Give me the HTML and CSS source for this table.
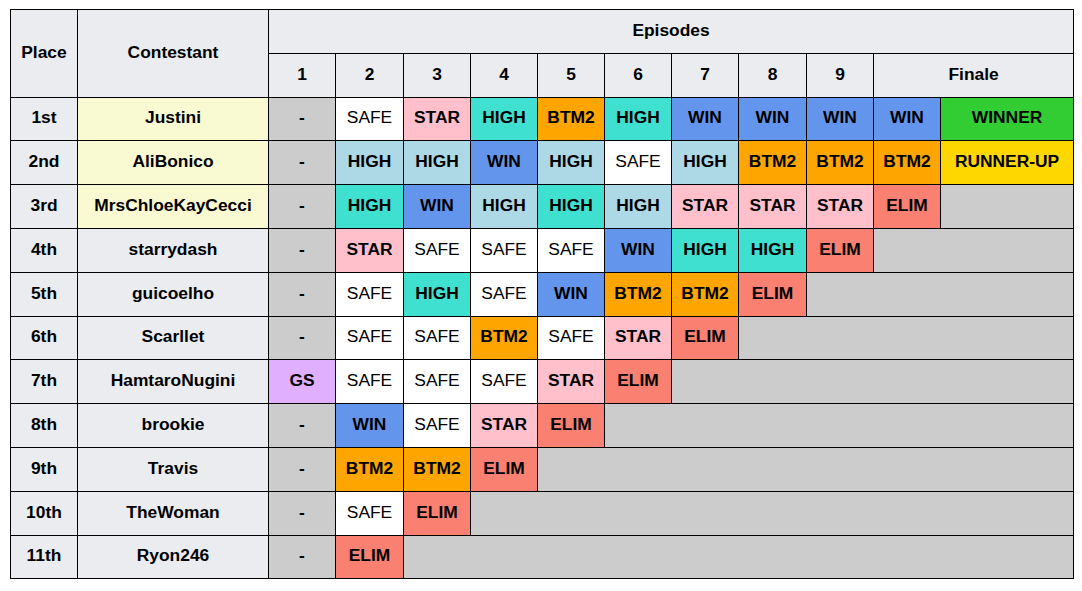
FILE: index.html
```html
<!DOCTYPE html>
<html>
<head>
<meta charset="utf-8">
<link rel="stylesheet" href="styles.css">
</head>
<body>
<table class="results">
  <colgroup>
    <col class="c-place"><col class="c-name">
    <col class="c-ep"><col class="c-ep2"><col class="c-ep"><col class="c-ep"><col class="c-ep"><col class="c-ep"><col class="c-ep"><col class="c-ep2"><col class="c-ep">
    <col class="c-ep"><col class="c-final">
  </colgroup>
  <thead>
    <tr>
      <th rowspan="2">Place</th>
      <th rowspan="2">Contestant</th>
      <th colspan="11">Episodes</th>
    </tr>
    <tr>
      <th>1</th><th>2</th><th>3</th><th>4</th><th>5</th><th>6</th><th>7</th><th>8</th><th>9</th>
      <th colspan="2">Finale</th>
    </tr>
  </thead>
  <tbody>
    <tr>
      <th>1st</th><td class="name top">Justini</td>
      <td class="na">-</td><td class="safe">SAFE</td><td class="star">STAR</td><td class="high">HIGH</td><td class="btm">BTM2</td><td class="high">HIGH</td><td class="win">WIN</td><td class="win">WIN</td><td class="win">WIN</td><td class="win">WIN</td><td class="winner">WINNER</td>
    </tr>
    <tr>
      <th>2nd</th><td class="name top">AliBonico</td>
      <td class="na">-</td><td class="low">HIGH</td><td class="low">HIGH</td><td class="win">WIN</td><td class="low">HIGH</td><td class="safe">SAFE</td><td class="low">HIGH</td><td class="btm">BTM2</td><td class="btm">BTM2</td><td class="btm">BTM2</td><td class="runner">RUNNER-UP</td>
    </tr>
    <tr>
      <th>3rd</th><td class="name top">MrsChloeKayCecci</td>
      <td class="na">-</td><td class="high">HIGH</td><td class="win">WIN</td><td class="low">HIGH</td><td class="high">HIGH</td><td class="low">HIGH</td><td class="star">STAR</td><td class="star">STAR</td><td class="star">STAR</td><td class="elim">ELIM</td><td class="out"></td>
    </tr>
    <tr>
      <th>4th</th><td class="name">starrydash</td>
      <td class="na">-</td><td class="star">STAR</td><td class="safe">SAFE</td><td class="safe">SAFE</td><td class="safe">SAFE</td><td class="win">WIN</td><td class="high">HIGH</td><td class="high">HIGH</td><td class="elim">ELIM</td><td class="out" colspan="2"></td>
    </tr>
    <tr>
      <th>5th</th><td class="name">guicoelho</td>
      <td class="na">-</td><td class="safe">SAFE</td><td class="high">HIGH</td><td class="safe">SAFE</td><td class="win">WIN</td><td class="btm">BTM2</td><td class="btm">BTM2</td><td class="elim">ELIM</td><td class="out" colspan="3"></td>
    </tr>
    <tr>
      <th>6th</th><td class="name">Scarllet</td>
      <td class="na">-</td><td class="safe">SAFE</td><td class="safe">SAFE</td><td class="btm">BTM2</td><td class="safe">SAFE</td><td class="star">STAR</td><td class="elim">ELIM</td><td class="out" colspan="4"></td>
    </tr>
    <tr>
      <th>7th</th><td class="name">HamtaroNugini</td>
      <td class="gs">GS</td><td class="safe">SAFE</td><td class="safe">SAFE</td><td class="safe">SAFE</td><td class="star">STAR</td><td class="elim">ELIM</td><td class="out" colspan="5"></td>
    </tr>
    <tr>
      <th>8th</th><td class="name">brookie</td>
      <td class="na">-</td><td class="win">WIN</td><td class="safe">SAFE</td><td class="star">STAR</td><td class="elim">ELIM</td><td class="out" colspan="6"></td>
    </tr>
    <tr>
      <th>9th</th><td class="name">Travis</td>
      <td class="na">-</td><td class="btm">BTM2</td><td class="btm">BTM2</td><td class="elim">ELIM</td><td class="out" colspan="7"></td>
    </tr>
    <tr>
      <th>10th</th><td class="name">TheWoman</td>
      <td class="na">-</td><td class="safe">SAFE</td><td class="elim">ELIM</td><td class="out" colspan="8"></td>
    </tr>
    <tr>
      <th>11th</th><td class="name">Ryon246</td>
      <td class="na">-</td><td class="elim">ELIM</td><td class="out" colspan="9"></td>
    </tr>
  </tbody>
</table>
</body>
</html>
```
FILE: styles.css
```css
html, body {
  margin: 0;
  padding: 0;
  background: #ffffff;
}

body {
  font-family: "Liberation Sans", Arial, sans-serif;
  font-size: 17.4px;
  color: #000000;
}

.results {
  margin: 9px 0 0 10px;
  border-collapse: collapse;
  table-layout: fixed;
  width: 1064px;
}

.c-place { width: 67px; }
.c-name { width: 191px; }
.c-ep { width: 67px; }
.c-ep2 { width: 68px; }
.c-final { width: 133px; }

.results tr {
  height: 43.8px;
}

.results th,
.results td {
  border: 1px solid #000000;
  text-align: center;
  vertical-align: middle;
  padding: 0 0 2px 0;
  font-weight: bold;
  white-space: nowrap;
}

.results th {
  background: #eaecf0;
}

.results td.name { background: #eaecf0; }
.results td.name.top { background: #fafad2; }
.results td.na { background: #cccccc; }
.results td.out { background: #cccccc; }
.results td.safe { background: #ffffff; font-weight: normal; }
.results td.star { background: #ffc0cb; }
.results td.high { background: #40e0d0; }
.results td.low { background: #add8e6; }
.results td.win { background: #6495ed; }
.results td.btm { background: #ffa500; }
.results td.elim { background: #fa8072; }
.results td.winner { background: #32cd32; }
.results td.runner { background: #ffd700; }
.results td.gs { background: #e0b0ff; }
```
